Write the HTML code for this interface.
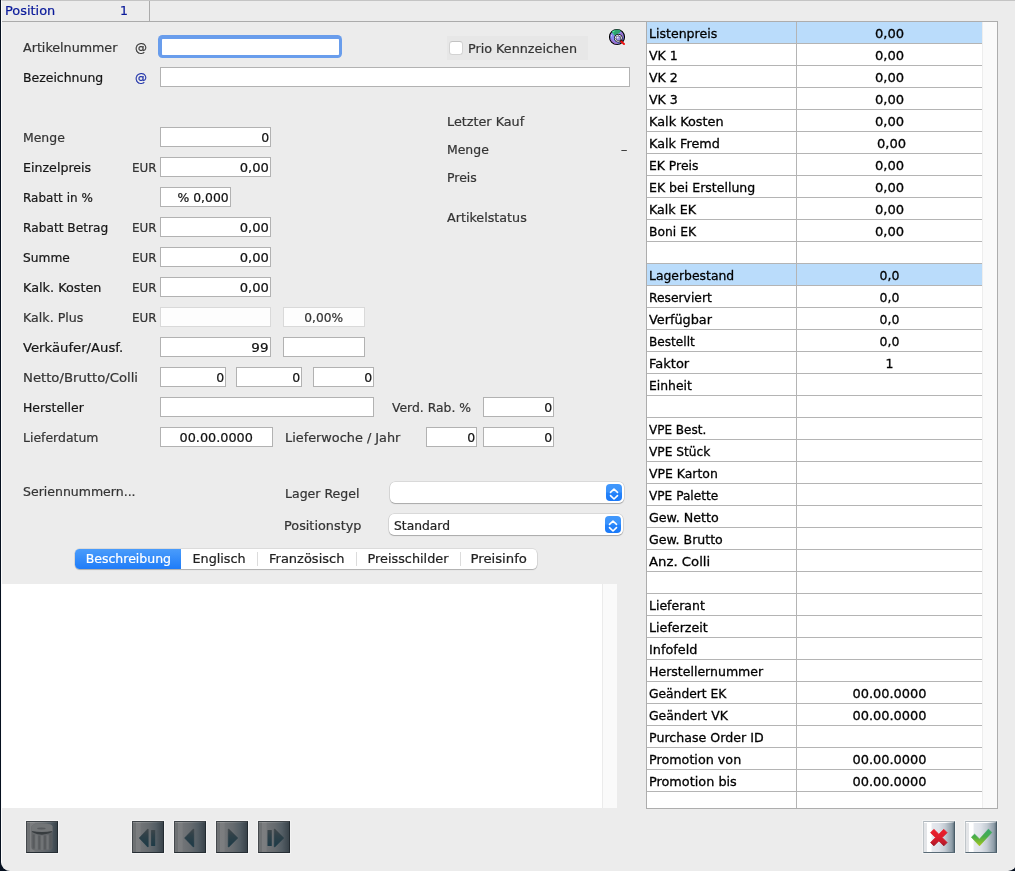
<!DOCTYPE html>
<html lang="de"><head><meta charset="utf-8"><title>Position</title>
<style>
*{box-sizing:border-box;margin:0;padding:0}
html,body{width:1015px;height:871px;overflow:hidden;background:#06101f}
body{font-family:"DejaVu Sans","Liberation Sans",sans-serif;font-size:13px;color:#161616;position:relative;letter-spacing:0;-webkit-text-stroke:0.22px}
#win{will-change:transform;position:absolute;left:1px;top:0;width:1016px;height:871px;background:#ececec;border-radius:0 0 9px 9px;border-left:1px solid #fbfbfb;border-top:1px solid #c4c4c4}
.a{position:absolute;white-space:nowrap}
.l{position:absolute;white-space:nowrap;height:20px;line-height:22px;transform-origin:0 0}
.g{color:#343434}
.k{color:#161616}
.in{position:absolute;height:20px;background:#fff;border:1px solid #b2b2b2;line-height:20px;text-align:right;padding:0 1px 0 0;color:#111;white-space:nowrap;overflow:hidden}
.in span{display:inline-block;transform:scaleX(.962);transform-origin:100% 0}
.in.c{text-align:center;padding:0}
.in.c span{transform-origin:50% 0}
.in.d{background:#fdfdfd;border-color:#d9d9d9;color:#333}
.hl{position:absolute;background:#ababab;height:1px}
.vl{position:absolute;background:#ababab;width:1px}
#tbl{position:absolute;left:646px;top:21px;width:352px;height:788px;background:#fff;border:1px solid #adadad;overflow:hidden}
#tbl .r{position:absolute;left:0;width:335px;height:22px;border-bottom:1px solid #b4b4b4;line-height:23px}
#tbl .r.s{background:#badcfb}
#tbl .r span{position:absolute;top:0;height:21px;white-space:nowrap;color:#000;-webkit-text-stroke:0.3px}
#tbl .r .n{left:2px;transform:scaleX(.962);transform-origin:0 0}
#tbl .r .v{left:150px;width:185px;text-align:center;transform:scaleX(.962);transform-origin:50% 0}
#tbl .cd{position:absolute;left:149px;top:0;width:1px;height:786px;background:#b4b4b4}
#tbl .sb{position:absolute;left:335px;top:0;width:15px;height:786px;background:#fafafa;border-left:1px solid #ededed}
.sel{position:absolute;height:21px;background:#fff;border-radius:5px;box-shadow:0 0 0 0.5px rgba(0,0,0,.16),0 1px 1px rgba(0,0,0,.22);line-height:21px;padding-left:5px;color:#222}
.sel i{position:absolute;right:2px;top:2px;width:16px;height:17px;border-radius:4px;background:linear-gradient(#4198fc 0,#3a92fb 48%,#2583fa 52%,#1a79f8 100%)}
.sel svg{position:absolute;left:0;top:0}
#seg{position:absolute;left:75px;top:549px;width:462px;height:20px;background:#fff;border-radius:4.5px;box-shadow:0 0 0 0.5px rgba(0,0,0,.14),0 1px 1px rgba(0,0,0,.2);line-height:19px;color:#222}
#seg div{position:absolute;top:0;height:20px;text-align:center}
#seg .on{background:linear-gradient(#4a9cfb,#1f7cf8);color:#fff;border-radius:4.5px 0 0 4.5px}
#seg b{position:absolute;top:3px;width:1px;height:14px;background:#dcdcdc}
.db{position:absolute;width:32px;height:32px;border:1px solid;border-color:#3f4448 #222a30 #262e34 #45494d;box-shadow:0 0 0 1px rgba(255,255,255,.38);background:linear-gradient(90deg,#6e7173 0,#6e7173 2.8px,#7c7e80 3.4px,#7b7d7f 7px,#717477 8.2px,#666b6f 16px,#535d64 23px,#39434a 30px)}
.db:before{content:"";position:absolute;left:0;top:0;right:0;height:1.3px;background:linear-gradient(90deg,rgba(255,255,255,.17),rgba(255,255,255,.12) 60%,rgba(255,255,255,.03))}
.lb{position:absolute;width:32px;height:32px;border:1px solid;border-color:#b0b8be #4a5c68 #586a76 #c0c6ca;box-shadow:0 0 0 1px rgba(255,255,255,.38);background:linear-gradient(90deg,#e3e5e8 0,#e3e5e8 2.8px,#fff 3.4px,#fff 7px,#e6e9ee 8.2px,#dde1e8 15px,#c3cbd3 21px,#8d9ca7 28px,#62747f 30px)}
.lb:before{content:"";position:absolute;left:0;top:0;right:0;height:1.15px;background:linear-gradient(90deg,#fff,#fff 70%,rgba(255,255,255,.2))}
.db svg,.lb svg{position:absolute;left:-1px;top:-1px}
</style></head>
<body>
<div id="win">
<div class="hl" style="left:0;top:20px;width:996px"></div>
<div class="vl" style="left:147px;top:0;height:20px"></div>
<div class="l k" style="left:3px;top:-1px;transform:scaleX(0.9936);color:#0a1a9a;">Position</div>
<div class="l k" style="left:118px;top:-1px;transform:scaleX(0.962);color:#0a1a9a;">1</div>
<div class="l g" style="left:21px;top:36px;transform:scaleX(0.9754);">Artikelnummer</div>
<div class="l g" style="left:133px;top:36px;transform:scaleX(0.9231);">@</div>
<div class="l k" style="left:21px;top:66px;transform:scaleX(0.958);">Bezeichnung</div>
<div class="l k" style="left:133px;top:66px;transform:scaleX(0.9231);color:#1c2fa8;">@</div>
<div class="l g" style="left:21px;top:126px;transform:scaleX(0.9561);">Menge</div>
<div class="l k" style="left:21px;top:156px;transform:scaleX(0.9715);">Einzelpreis</div>
<div class="l g" style="left:130px;top:156px;transform:scaleX(0.9191);">EUR</div>
<div class="l k" style="left:21px;top:186px;transform:scaleX(0.9232);">Rabatt in %</div>
<div class="l k" style="left:21px;top:216px;transform:scaleX(0.9379);">Rabatt Betrag</div>
<div class="l g" style="left:130px;top:216px;transform:scaleX(0.9191);">EUR</div>
<div class="l k" style="left:21px;top:246px;transform:scaleX(0.9392);">Summe</div>
<div class="l g" style="left:130px;top:246px;transform:scaleX(0.9191);">EUR</div>
<div class="l k" style="left:21px;top:276px;transform:scaleX(0.9848);">Kalk. Kosten</div>
<div class="l g" style="left:130px;top:276px;transform:scaleX(0.9191);">EUR</div>
<div class="l g" style="left:21px;top:306px;transform:scaleX(0.972);">Kalk. Plus</div>
<div class="l g" style="left:130px;top:306px;transform:scaleX(0.9191);">EUR</div>
<div class="l k" style="left:21px;top:336px;transform:scaleX(1.0152);">Verkäufer/Ausf.</div>
<div class="l g" style="left:21px;top:366px;transform:scaleX(1.0163);">Netto/Brutto/Colli</div>
<div class="l k" style="left:21px;top:396px;transform:scaleX(0.9565);">Hersteller</div>
<div class="l g" style="left:21px;top:426px;transform:scaleX(0.9573);">Lieferdatum</div>
<div class="a" style="left:156.4px;top:34.4px;width:184.1px;height:23.1px;border-radius:4.5px;background:#699dec"><div class="a" style="left:3.3px;top:3.2px;right:3.2px;bottom:3.3px;background:#fff;border-radius:.8px"></div></div>
<div class="in " style="left:158px;top:66px;width:470px"></div>
<div class="in " style="left:158px;top:126px;width:111px"><span style="transform:scaleX(0.962)">0</span></div>
<div class="in " style="left:158px;top:156px;width:111px"><span style="transform:scaleX(1.0085)">0,00</span></div>
<div class="in " style="left:158px;top:186px;width:71px"><span style="transform:scaleX(0.9534)">% 0,000</span></div>
<div class="in " style="left:158px;top:216px;width:111px"><span style="transform:scaleX(1.0085)">0,00</span></div>
<div class="in " style="left:158px;top:246px;width:111px"><span style="transform:scaleX(1.0085)">0,00</span></div>
<div class="in " style="left:158px;top:276px;width:111px"><span style="transform:scaleX(1.0085)">0,00</span></div>
<div class="in d" style="left:158px;top:306px;width:111px"></div>
<div class="in d c" style="left:281px;top:306px;width:82px"><span style="transform:scaleX(0.9392)">0,00%</span></div>
<div class="in " style="left:158px;top:336px;width:111px"><span style="transform:scaleX(1.0395)">99</span></div>
<div class="in " style="left:281px;top:336px;width:82px"></div>
<div class="in " style="left:158px;top:366px;width:66px"><span style="transform:scaleX(0.962)">0</span></div>
<div class="in " style="left:234px;top:366px;width:66px"><span style="transform:scaleX(0.962)">0</span></div>
<div class="in " style="left:311px;top:366px;width:61px"><span style="transform:scaleX(0.962)">0</span></div>
<div class="in " style="left:158px;top:396px;width:214px"></div>
<div class="in c" style="left:158px;top:426px;width:113px"><span style="transform:scaleX(0.9861)">00.00.0000</span></div>
<div class="l g" style="left:283px;top:426px;transform:scaleX(0.9882);">Lieferwoche / Jahr</div>
<div class="in " style="left:424px;top:426px;width:51px"><span style="transform:scaleX(0.962)">0</span></div>
<div class="in " style="left:481px;top:426px;width:71px"><span style="transform:scaleX(0.962)">0</span></div>
<div class="l g" style="left:390px;top:396px;transform:scaleX(0.9506);">Verd. Rab. %</div>
<div class="in " style="left:481px;top:396px;width:71px"><span style="transform:scaleX(0.962)">0</span></div>
<div class="a" style="left:445px;top:35px;width:141px;height:24px;background:#e7e7e7"></div>
<div class="a" style="left:447px;top:40px;width:14px;height:14px;background:#fff;border-radius:3.5px;border:1px solid #d3d3d3;border-top-color:#c3c3c3"></div>
<div class="l g" style="left:466px;top:37px;transform:scaleX(0.9813);">Prio Kennzeichen</div>
<svg class="a" style="left:606px;top:27px" width="19" height="19" viewBox="0 0 19 19">
<circle cx="9" cy="9" r="8.6" fill="#fff" opacity=".8"/>
<circle cx="9" cy="9" r="7.5" fill="#8a8af0" stroke="#000" stroke-width="1.2"/>
<path d="M3.6 3.8 Q6 1.6 9 1.6 Q11.5 1.6 13 3 L11.5 5 L8.5 6.6 L7.4 8.2 L5.2 6.2 Z" fill="#2fa471"/>
<path d="M4.3 3.6 l2-1.2 l.4 1.2 l-1.6 .8z M5 5.4 l.8 0 l0 .8 l-.8 0z" fill="#4cf0a0"/>
<path d="M3 11 q2 4 6 4.6 M12.8 4.5 q2 2 1.6 5" stroke="#a860b8" stroke-width="1.2" fill="none" opacity=".8"/>
<path d="M2.5 6.5 l1.5 1 l-.5 1.5z" fill="#e4e4ff"/>
<circle cx="10.4" cy="10.3" r="3.3" fill="#9a90e0" stroke="#000" stroke-width="1.9"/>
<circle cx="10.4" cy="10.3" r="3.2" fill="none" stroke="#f2f2f2" stroke-width="1"/>
<circle cx="9.6" cy="9.6" r="1" fill="#e8e8ff"/>
<path d="M12.4 12.2 L14.4 14.2" stroke="#000" stroke-width="2.8" stroke-linecap="butt"/>
<path d="M13.3 13.5 L16 16" stroke="#f01010" stroke-width="2" stroke-linecap="round"/>
</svg>
<div class="l g" style="left:445px;top:110px;transform:scaleX(0.9823);">Letzter Kauf</div>
<div class="l g" style="left:445px;top:138px;transform:scaleX(0.9561);">Menge</div>
<div class="l g" style="left:445px;top:166px;transform:scaleX(0.9594);">Preis</div>
<div class="l g" style="left:445px;top:206px;transform:scaleX(0.9782);">Artikelstatus</div>
<div class="l g" style="left:619px;top:138px;transform:scaleX(0.962);">–</div>
<div class="l g" style="left:21px;top:480px;transform:scaleX(0.9624);">Seriennummern...</div>
<div class="l g" style="left:283px;top:482px;transform:scaleX(0.9631);">Lager Regel</div>
<div class="l g" style="left:282px;top:514px;transform:scaleX(0.9868);">Positionstyp</div>
<div class="sel" style="left:388px;top:481px;width:234px"><i><svg width="16" height="17" viewBox="0 0 16 17"><path d="M4.5 8.4 L8 5 L11.5 8.4 M4.5 11.6 L8 15 L11.5 11.6" fill="none" stroke="#fff" stroke-width="1.6" stroke-linecap="round" stroke-linejoin="round"/></svg></i></div>
<div class="sel" style="left:387px;top:513px;width:234px"><span style="display:inline-block;transform-origin:0 0;transform:scaleX(0.9466);position:relative;top:1px">Standard</span><i><svg width="16" height="17" viewBox="0 0 16 17"><path d="M4.5 8.4 L8 5 L11.5 8.4 M4.5 11.6 L8 15 L11.5 11.6" fill="none" stroke="#fff" stroke-width="1.6" stroke-linecap="round" stroke-linejoin="round"/></svg></i></div>
<div id="seg" style="left:73px;top:548px"><div class="on" style="left:0px;width:106px"><span style="display:inline-block;transform:scaleX(0.9624)">Beschreibung</span></div><div class="" style="left:106px;width:76px"><span style="display:inline-block;transform:scaleX(0.9835)">Englisch</span></div><div class="" style="left:182px;width:99px"><span style="display:inline-block;transform:scaleX(0.9999)">Französisch</span></div><div class="" style="left:281px;width:104.5px"><span style="display:inline-block;transform:scaleX(0.985)">Preisschilder</span></div><div class="" style="left:385.5px;width:76.5px"><span style="display:inline-block;transform:scaleX(1.0174)">Preisinfo</span></div><b style="left:181.5px"></b><b style="left:280.5px"></b><b style="left:385.0px"></b></div>
<div class="a" style="left:0;top:583px;width:600px;height:224px;background:#fff"></div>
<div class="a" style="left:600px;top:583px;width:15px;height:224px;background:#fafafa;border-left:1px solid #ebebeb"></div>
<div id="tbl" style="left:644px;top:20px">
<div class="r s" style="top:0px"><span class="n" style="transform:scaleX(0.9652)">Listenpreis</span><span class="v" style="transform:scaleX(1.0085)">0,00</span></div>
<div class="r" style="top:22px"><span class="n" style="transform:scaleX(0.9655)">VK 1</span><span class="v" style="transform:scaleX(1.0085)">0,00</span></div>
<div class="r" style="top:44px"><span class="n" style="transform:scaleX(0.9655)">VK 2</span><span class="v" style="transform:scaleX(1.0085)">0,00</span></div>
<div class="r" style="top:66px"><span class="n" style="transform:scaleX(0.9655)">VK 3</span><span class="v" style="transform:scaleX(1.0085)">0,00</span></div>
<div class="r" style="top:88px"><span class="n" style="transform:scaleX(0.9883)">Kalk Kosten</span><span class="v" style="transform:scaleX(1.0085)">0,00</span></div>
<div class="r" style="top:110px"><span class="n" style="transform:scaleX(0.9827)">Kalk Fremd</span><span class="v" style="margin-left:2px;transform:scaleX(1.0085)">0,00</span></div>
<div class="r" style="top:132px"><span class="n" style="transform:scaleX(0.9511)">EK Preis</span><span class="v" style="transform:scaleX(1.0085)">0,00</span></div>
<div class="r" style="top:154px"><span class="n" style="transform:scaleX(0.9633)">EK bei Erstellung</span><span class="v" style="transform:scaleX(1.0085)">0,00</span></div>
<div class="r" style="top:176px"><span class="n" style="transform:scaleX(0.9735)">Kalk EK</span><span class="v" style="transform:scaleX(1.0085)">0,00</span></div>
<div class="r" style="top:198px"><span class="n" style="transform:scaleX(0.9474)">Boni EK</span><span class="v" style="transform:scaleX(1.0085)">0,00</span></div>
<div class="r" style="top:220px"></div>
<div class="r s" style="top:242px"><span class="n" style="transform:scaleX(0.9531)">Lagerbestand</span><span class="v" style="transform:scaleX(0.962)">0,0</span></div>
<div class="r" style="top:264px"><span class="n" style="transform:scaleX(0.947)">Reserviert</span><span class="v" style="transform:scaleX(0.962)">0,0</span></div>
<div class="r" style="top:286px"><span class="n" style="transform:scaleX(0.9865)">Verfügbar</span><span class="v" style="transform:scaleX(0.962)">0,0</span></div>
<div class="r" style="top:308px"><span class="n" style="transform:scaleX(0.9326)">Bestellt</span><span class="v" style="transform:scaleX(0.962)">0,0</span></div>
<div class="r" style="top:330px"><span class="n" style="transform:scaleX(1.0003)">Faktor</span><span class="v" style="transform:scaleX(0.962)">1</span></div>
<div class="r" style="top:352px"><span class="n" style="transform:scaleX(0.9508)">Einheit</span></div>
<div class="r" style="top:374px"></div>
<div class="r" style="top:396px"><span class="n" style="transform:scaleX(0.9226)">VPE Best.</span></div>
<div class="r" style="top:418px"><span class="n" style="transform:scaleX(0.9366)">VPE Stück</span></div>
<div class="r" style="top:440px"><span class="n" style="transform:scaleX(0.9558)">VPE Karton</span></div>
<div class="r" style="top:462px"><span class="n" style="transform:scaleX(0.9338)">VPE Palette</span></div>
<div class="r" style="top:484px"><span class="n" style="transform:scaleX(0.9741)">Gew. Netto</span></div>
<div class="r" style="top:506px"><span class="n" style="transform:scaleX(0.9655)">Gew. Brutto</span></div>
<div class="r" style="top:528px"><span class="n" style="transform:scaleX(1.0184)">Anz. Colli</span></div>
<div class="r" style="top:550px"></div>
<div class="r" style="top:572px"><span class="n" style="transform:scaleX(0.9608)">Lieferant</span></div>
<div class="r" style="top:594px"><span class="n" style="transform:scaleX(0.9749)">Lieferzeit</span></div>
<div class="r" style="top:616px"><span class="n" style="transform:scaleX(0.9868)">Infofeld</span></div>
<div class="r" style="top:638px"><span class="n" style="transform:scaleX(0.9638)">Herstellernummer</span></div>
<div class="r" style="top:660px"><span class="n" style="transform:scaleX(0.9457)">Geändert EK</span><span class="v" style="transform:scaleX(0.9968)">00.00.0000</span></div>
<div class="r" style="top:682px"><span class="n" style="transform:scaleX(0.9548)">Geändert VK</span><span class="v" style="transform:scaleX(0.9968)">00.00.0000</span></div>
<div class="r" style="top:704px"><span class="n" style="transform:scaleX(0.9704)">Purchase Order ID</span></div>
<div class="r" style="top:726px"><span class="n" style="transform:scaleX(0.9791)">Promotion von</span><span class="v" style="transform:scaleX(0.9968)">00.00.0000</span></div>
<div class="r" style="top:748px"><span class="n" style="transform:scaleX(0.9874)">Promotion bis</span><span class="v" style="transform:scaleX(0.9968)">00.00.0000</span></div>
<div class="r" style="top:770px"></div>
<div class="cd"></div><div class="sb"></div>
</div>
<div class="db" style="left:24px;top:820px"><svg width="32" height="32" viewBox="0 0 32 32"><defs><linearGradient id="cg" x1="0" y1="0" x2="1" y2="0"><stop offset="0" stop-color="#606365"/><stop offset=".2" stop-color="#6b6e70"/><stop offset=".75" stop-color="#63666a"/><stop offset="1" stop-color="#565b5f"/></linearGradient></defs>
<path d="M5.4 6 Q5.4 2.6 16 2.6 Q26.6 2.6 26.6 6 L26.6 26 Q26.6 29.4 22 29.4 L10 29.4 Q5.4 29.4 5.4 26 Z" fill="url(#cg)"/>
<path d="M7.7 13.6 V27.6 M13.3 14.6 V28.6 M18.9 14.6 V28.6 M24.5 13.6 V27.6" stroke="#575a5d" stroke-width="2" opacity=".9"/>
<path d="M10.5 14.2 V28.6 M16.1 14.8 V28.9 M21.7 14.2 V28.6" stroke="#737678" stroke-width="2" opacity=".9"/>
<path d="M5.5 5.5 Q5.5 2.6 16 2.6 Q26.5 2.6 26.5 5.5 L26.5 10.6 Q16 12.6 5.5 10.6 Z" fill="#727577"/>
<ellipse cx="15.4" cy="7.5" rx="4.2" ry="0.9" fill="#585b5e"/>
<path d="M5.6 10 Q16 12.2 26.4 10 Q25.6 12.6 16 13.8 Q6.4 12.8 5.6 10 Z" fill="#383d40"/></svg></div>
<div class="db" style="left:130px;top:820px"><svg width="32" height="32" viewBox="0 0 32 32"><defs><linearGradient id="tg" gradientUnits="userSpaceOnUse" x1="0" y1="8" x2="0" y2="26"><stop offset="0" stop-color="#3f464a"/><stop offset=".35" stop-color="#2f4048"/><stop offset="1" stop-color="#1c3a47"/></linearGradient></defs><path d="M7.1 17 L15.600000000000001 8.1 Q16.3 7.6 16.3 8.6 L16.3 25.4 Q16.3 26.4 15.600000000000001 25.9 Z" fill="url(#tg)" stroke="url(#tg)" stroke-width=".5" stroke-linejoin="round"/><rect x="19.1" y="8.9" width="4.1" height="16.1" rx=".5" fill="url(#tg)"/></svg></div>
<div class="db" style="left:172px;top:820px"><svg width="32" height="32" viewBox="0 0 32 32"><path d="M10.5 17 L19.2 8.1 Q19.9 7.6 19.9 8.6 L19.9 25.4 Q19.9 26.4 19.2 25.9 Z" fill="url(#tg)" stroke="url(#tg)" stroke-width=".5" stroke-linejoin="round"/></svg></div>
<div class="db" style="left:214px;top:820px"><svg width="32" height="32" viewBox="0 0 32 32"><path d="M21.9 17 L12.899999999999999 8.1 Q12.2 7.6 12.2 8.6 L12.2 25.4 Q12.2 26.4 12.899999999999999 25.9 Z" fill="url(#tg)" stroke="url(#tg)" stroke-width=".5" stroke-linejoin="round"/></svg></div>
<div class="db" style="left:256px;top:820px"><svg width="32" height="32" viewBox="0 0 32 32"><rect x="9.5" y="8.9" width="4.3" height="16.1" rx=".5" fill="url(#tg)"/><path d="M25.9 17 L16.9 8.1 Q16.2 7.6 16.2 8.6 L16.2 25.4 Q16.2 26.4 16.9 25.9 Z" fill="url(#tg)" stroke="url(#tg)" stroke-width=".5" stroke-linejoin="round"/></svg></div>
<div class="lb" style="left:921px;top:820px"><svg width="32" height="32" viewBox="0 0 32 32"><defs><linearGradient id="rg" gradientUnits="userSpaceOnUse" x1="0" y1="8" x2="0" y2="25.5"><stop offset="0" stop-color="#ec1f2b"/><stop offset=".45" stop-color="#df1d2c"/><stop offset=".8" stop-color="#c01a2a"/><stop offset="1" stop-color="#8e1220"/></linearGradient></defs><path d="M15.85 19.92 L20.80 24.87 L24.12 21.55 L19.17 16.60 L24.12 11.65 L20.80 8.33 L15.85 13.28 L10.90 8.33 L7.58 11.65 L12.53 16.60 L7.58 21.55 L10.90 24.87 Z" fill="url(#rg)" stroke="url(#rg)" stroke-width=".8" stroke-linejoin="round"/></svg></div>
<div class="lb" style="left:963px;top:820px"><svg width="32" height="32" viewBox="0 0 32 32"><defs><linearGradient id="gg" gradientUnits="userSpaceOnUse" x1="0" y1="8" x2="0" y2="25"><stop offset="0" stop-color="#36a66c"/><stop offset=".45" stop-color="#48ad4a"/><stop offset="1" stop-color="#a6c61c"/></linearGradient></defs><path d="M6.3 16.2 L9.6 13.1 L14.5 17.9 L23.4 8.1 L26.9 11.4 L14.5 24.9 Z" fill="url(#gg)" stroke="url(#gg)" stroke-width=".5" stroke-linejoin="round"/></svg></div>
</div>
</body></html>
